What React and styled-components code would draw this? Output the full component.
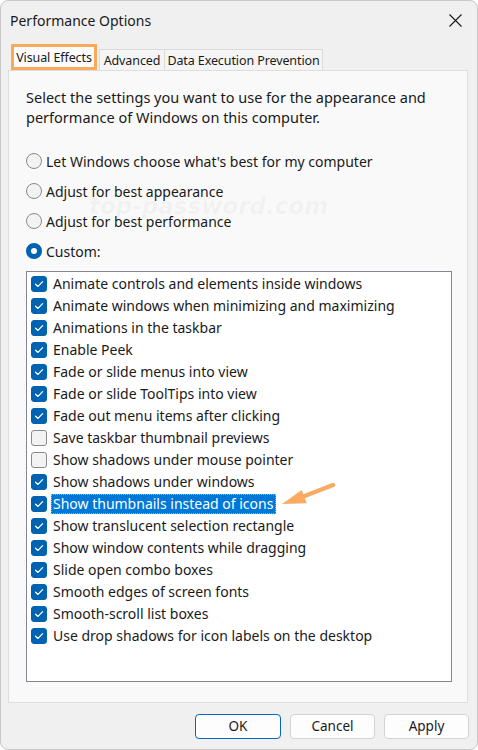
import React from 'react'
import styled, { createGlobalStyle } from 'styled-components'

const GlobalStyle = createGlobalStyle`
body {
  margin: 0;
  background: #ffffff;
}
`

const Window = styled.div`
width: 478px;
height: 750px;
box-sizing: border-box;
border: 1px solid #c8c8c8;
border-radius: 8px;
background: #f0f0f0;
display: flex;
flex-direction: column;
overflow: hidden;
font-family: "Segoe UI", "Noto Sans", sans-serif;
color: #1a1a1a;
`
const TitleBar = styled.div`
height: 39px;
display: flex;
align-items: center;
justify-content: space-between;
padding: 0 15px 0 9px;
font-size: 14px;
`
const TabStrip = styled.div`
height: 30px;
display: flex;
align-items: flex-end;
padding-left: 10px;
`
const Tab = styled.div`
box-sizing: border-box;
height: ${p => (p.$active ? '26px' : '21px')};
width: ${p => p.$w}px;
margin-right: ${p => (p.$active ? '2px' : '0')};
display: flex;
align-items: center;
justify-content: center;
white-space: nowrap;
font-size: 12.5px;
letter-spacing: -0.1px;
background: ${p => (p.$active ? '#fbfbfb' : '#f5f5f5')};
border: ${p => (p.$active ? '3px solid #f8a95a' : '1px solid #dadada')};
border-bottom: ${p => (p.$active ? '3px solid #f8a95a' : 'none')};
margin-left: ${p => (p.$joined ? '-1px' : '0')};
padding-top: ${p => (p.$active ? '0' : '1px')};
`
const Panel = styled.div`
position: relative;
flex: 1;
margin: 0 9px 0 7px;
background: #f9f9f9;
border: 1px solid #dedede;
padding: 16px 15px 20px 17px;
display: flex;
flex-direction: column;
`
const Intro = styled.p`
margin: 0;
font-size: 14.5px;
line-height: 20px;
`
const RadioGroup = styled.div`
margin-top: 19px;
display: flex;
flex-direction: column;
`
const RadioRow = styled.label`
height: 30px;
display: flex;
align-items: center;
gap: 4px;
font-size: 14px;
`
const Radio = styled.span`
box-sizing: border-box;
width: 16px;
height: 16px;
border-radius: 50%;
background: ${p => (p.$on ? '#ffffff' : '#f3f3f3')};
border: ${p => (p.$on ? '5px solid #0063b1' : '1px solid #8a8a8a')};
`
const ListBox = styled.div`
position: relative;
flex: 1;
margin-top: 5px;
background: #ffffff;
border: 1px solid #828790;
padding: 1px 0 0 4px;
`
const Row = styled.div`
height: 22px;
display: flex;
align-items: center;
font-size: 14px;
`
const Box = styled.span`
box-sizing: border-box;
width: 16px;
height: 16px;
border-radius: 3px;
flex-shrink: 0;
background: ${p => (p.$on ? '#0063b1' : '#f3f3f3')};
border: 1px solid ${p => (p.$on ? '#0063b1' : '#8a8a8a')};
display: flex;
align-items: center;
justify-content: center;
`
const Label = styled.span`
margin-left: 4px;
padding: 0 2px 0 1px;
line-height: 18px;
border: 1px dotted ${p => (p.$sel ? '#e9a050' : 'transparent')};
background: ${p => (p.$sel ? '#0078d7' : 'transparent')};
color: ${p => (p.$sel ? '#ffffff' : 'inherit')};
`
const Arrow = styled.svg`
position: absolute;
left: 251px;
top: 208px;
`
const Watermark = styled.div`
position: absolute;
left: 80px;
top: 122px;
font-family: "DejaVu Sans", sans-serif;
font-weight: bold;
font-style: italic;
font-size: 23px;
color: rgba(0, 0, 0, 0.04);
pointer-events: none;
`
const Footer = styled.div`
height: 46px;
display: flex;
align-items: center;
justify-content: flex-end;
gap: 9px;
padding-right: 8px;
`
const Button = styled.button`
box-sizing: border-box;
width: ${p => p.$w || 85}px;
height: 25px;
border-radius: 4px;
background: #fdfdfd;
border: 1px solid ${p => (p.$primary ? '#0067c0' : '#d3d3d3')};
font-family: inherit;
font-size: 13.5px;
color: #1a1a1a;
padding: 0;
`

const effects = [
  ['Animate controls and elements inside windows', true],
  ['Animate windows when minimizing and maximizing', true],
  ['Animations in the taskbar', true],
  ['Enable Peek', true],
  ['Fade or slide menus into view', true],
  ['Fade or slide ToolTips into view', true],
  ['Fade out menu items after clicking', true],
  ['Save taskbar thumbnail previews', false],
  ['Show shadows under mouse pointer', false],
  ['Show shadows under windows', true],
  ['Show thumbnails instead of icons', true, true],
  ['Show translucent selection rectangle', true],
  ['Show window contents while dragging', true],
  ['Slide open combo boxes', true],
  ['Smooth edges of screen fonts', true],
  ['Smooth-scroll list boxes', true],
  ['Use drop shadows for icon labels on the desktop', true],
]

const radios = [
  ["Let Windows choose what's best for my computer", false],
  ['Adjust for best appearance', false],
  ['Adjust for best performance', false],
  ['Custom:', true],
]

const Check = () => (
  <svg width="12" height="12" viewBox="0 0 12 12">
    <path d="M2.6 6.2 L5 8.4 L9.6 3.6" fill="none" stroke="#fff" strokeWidth="1.3" strokeLinecap="round" strokeLinejoin="round" />
  </svg>
)

const App = () => {
  return (
    <Window>
      <GlobalStyle />
      <TitleBar>
        <span>Performance Options</span>
        <svg width="13" height="13" viewBox="0 0 13 13">
          <path d="M0.5 0.5 L12.5 12.5 M12.5 0.5 L0.5 12.5" stroke="#1a1a1a" strokeWidth="1.1" />
        </svg>
      </TitleBar>
      <TabStrip>
        <Tab $active $w={86}>Visual Effects</Tab>
        <Tab $w={66}>Advanced</Tab>
        <Tab $w={159} $joined>Data Execution Prevention</Tab>
      </TabStrip>
      <Panel>
        <Watermark>top-password.com</Watermark>
        <Intro>
          Select the settings you want to use for the appearance and
          <br />
          performance of Windows on this computer.
        </Intro>
        <RadioGroup>
          {radios.map(([text, on]) => (
            <RadioRow key={text}>
              <Radio $on={on} />
              {text}
            </RadioRow>
          ))}
        </RadioGroup>
        <ListBox>
          {effects.map(([text, on, sel]) => (
            <Row key={text}>
              <Box $on={on}>{on && <Check />}</Box>
              <Label $sel={sel}>{text}</Label>
            </Row>
          ))}
          <Arrow width="60" height="30" viewBox="0 0 60 30">
            <path d="M55 5 L24 17" stroke="#f9ab62" strokeWidth="4.5" strokeLinecap="round" />
            <path d="M4 24 L23.7 10 L28.7 23.3 Z" fill="#f9ab62" />
          </Arrow>
        </ListBox>
      </Panel>
      <Footer>
        <Button $primary $w={86}>OK</Button>
        <Button>Cancel</Button>
        <Button>Apply</Button>
      </Footer>
    </Window>
  )
}

export default App
